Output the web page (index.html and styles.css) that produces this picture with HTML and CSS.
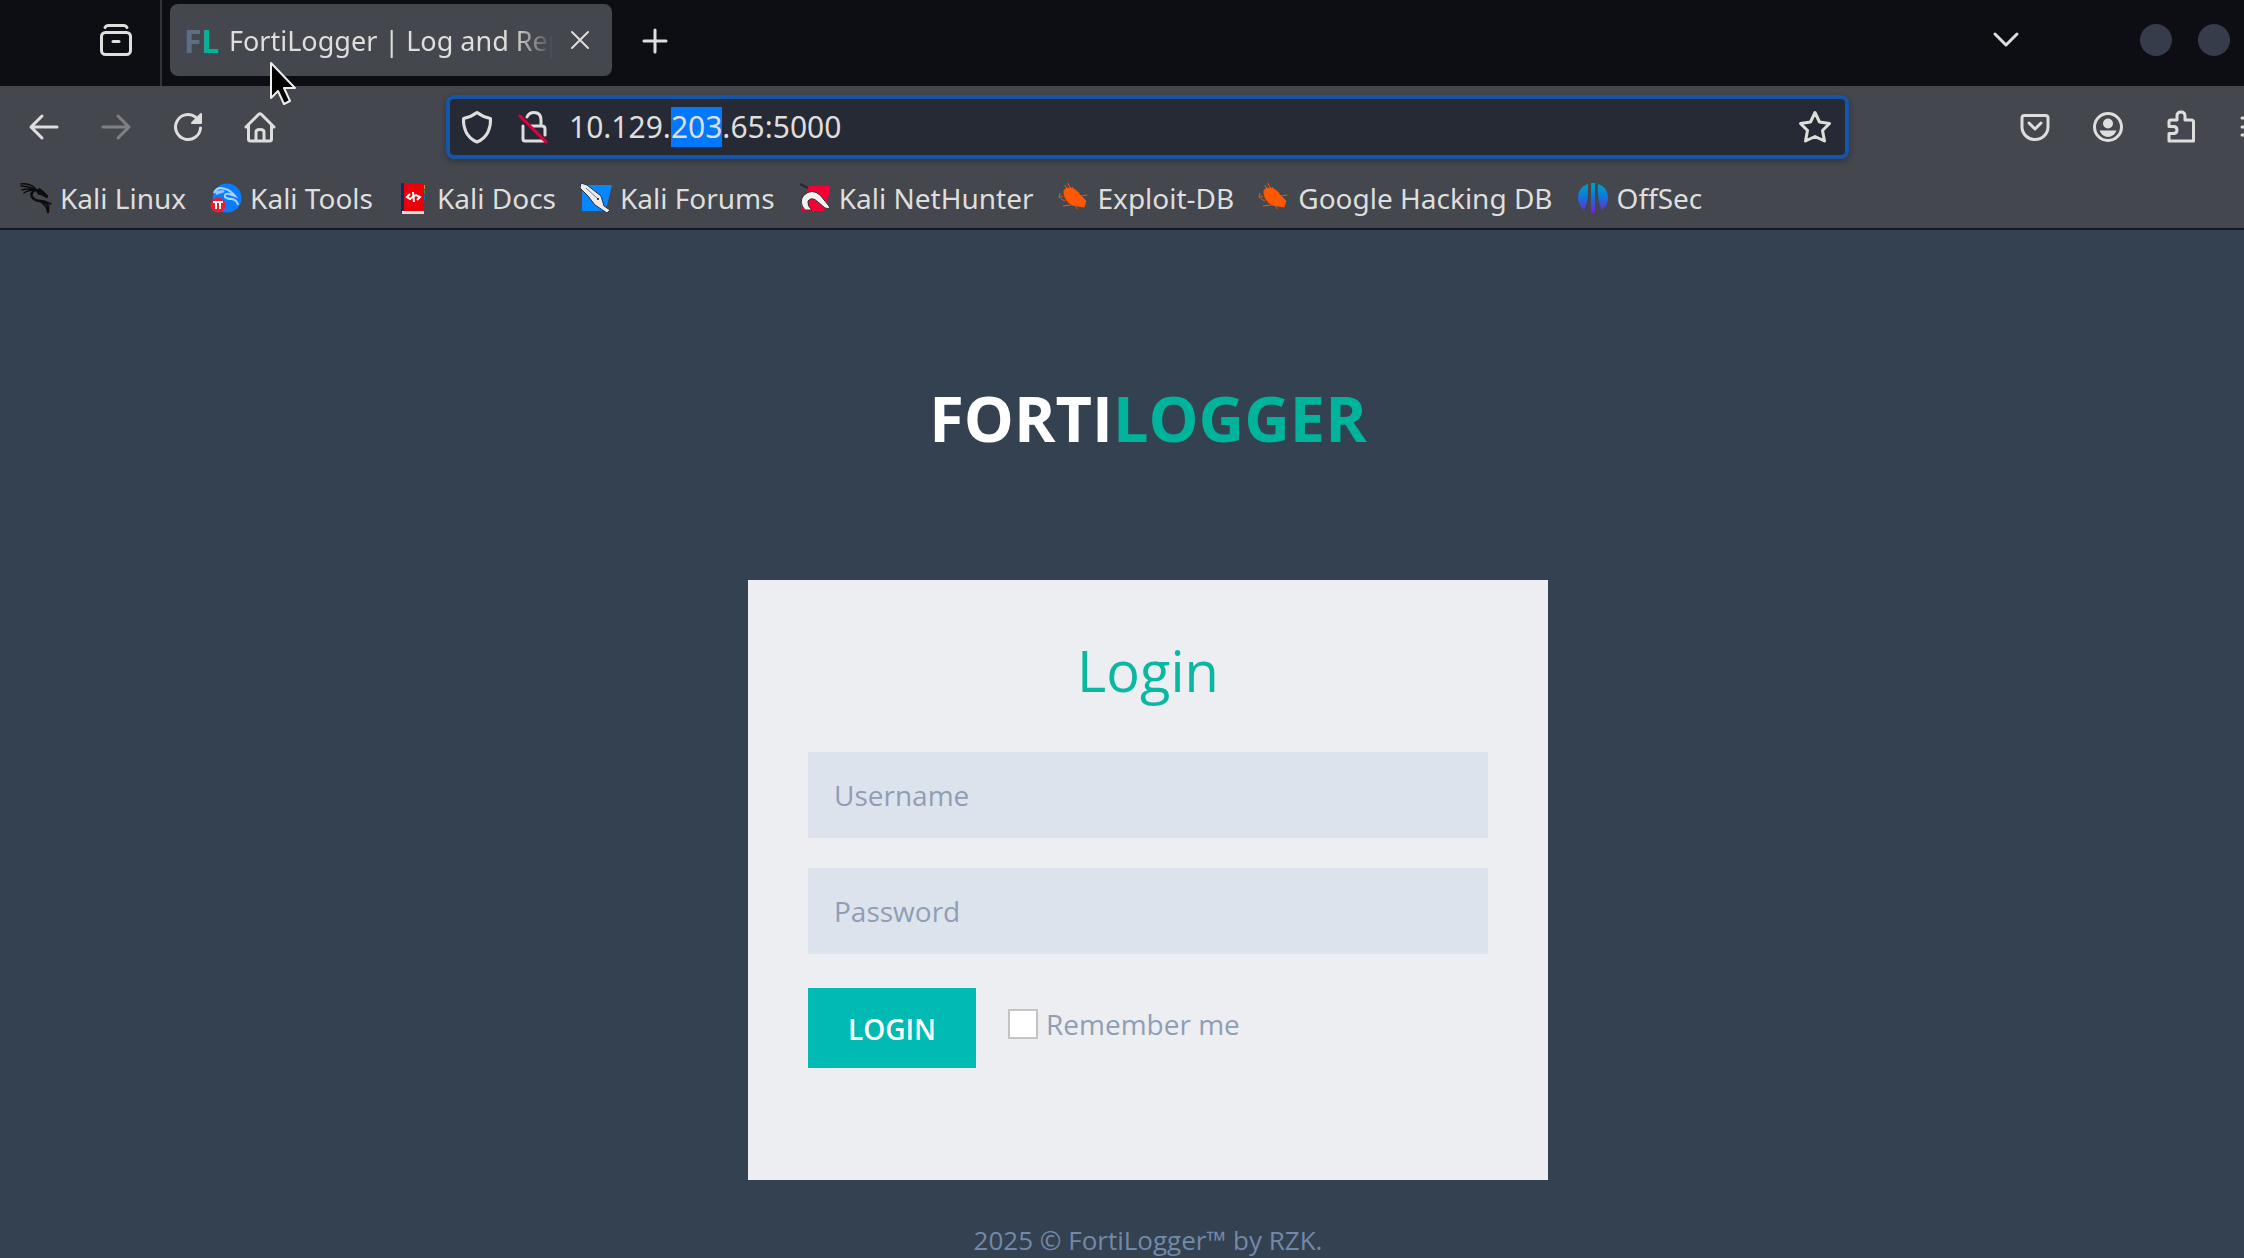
FILE: index.html
```html
<!DOCTYPE html>
<html lang="en">
<head>
<meta charset="utf-8">
<title>FortiLogger | Log and Report System</title>
<link rel="stylesheet" href="styles.css">
</head>
<body>
<div class="browser">
  <header class="tabstrip">
    <button class="icon-btn recent" aria-label="Recent browsing">
      <svg width="36" height="36" viewBox="0 0 36 36" fill="none" stroke="currentColor" stroke-width="3" stroke-linecap="round"><path d="M7 5.500Q8 3.500 10 3.500H26Q28 3.500 29 5.500"/><rect x="3.500" y="10.500" width="29" height="22" rx="4"/><path d="M15 19.500H21"/></svg>
    </button>
    <div class="tab">
      <span class="favicon"><span class="fav-f">F</span><span class="fav-l">L</span></span>
      <span class="tab-title">FortiLogger | Log and Report System</span>
      <button class="icon-btn" aria-label="Close tab">
        <svg width="20" height="20" viewBox="0 0 20 20" fill="none" stroke="currentColor" stroke-width="2" stroke-linecap="round"><path d="M2 2 18 18M18 2 2 18"/></svg>
      </button>
    </div>
    <button class="icon-btn new-tab" aria-label="New tab">
      <svg width="28" height="28" viewBox="0 0 28 28" fill="none" stroke="currentColor" stroke-width="3" stroke-linecap="round"><path d="M14 3V25M3 14H25"/></svg>
    </button>
    <div class="window-controls">
      <button class="icon-btn" aria-label="List all tabs">
        <svg width="28" height="28" viewBox="0 0 28 28" fill="none" stroke="currentColor" stroke-width="3" stroke-linecap="round" stroke-linejoin="round"><path d="M3 8 14 19 25 8"/></svg>
      </button>
      <button class="dot first" aria-label="Minimize"></button>
      <button class="dot" aria-label="Maximize"></button>
    </div>
  </header>

  <nav class="toolbar">
    <div class="nav-buttons">
      <button class="icon-btn" aria-label="Back">
        <svg width="36" height="36" viewBox="0 0 36 36" fill="none" stroke="currentColor" stroke-width="3" stroke-linecap="round" stroke-linejoin="round"><path d="M31 18H5M16 7 5 18 16 29"/></svg>
      </button>
      <button class="icon-btn dim" aria-label="Forward">
        <svg width="36" height="36" viewBox="0 0 36 36" fill="none" stroke="currentColor" stroke-width="3" stroke-linecap="round" stroke-linejoin="round"><path d="M5 18H31M20 7 31 18 20 29"/></svg>
      </button>
      <button class="icon-btn" aria-label="Reload">
        <svg width="36" height="36" viewBox="0 0 36 36" fill="none" stroke="currentColor" stroke-width="3" stroke-linecap="round"><path d="M30.500 19A12.500 12.500 0 1 1 25.500 8"/><path d="M31 5V14H22Z" fill="currentColor" stroke-width="2" stroke-linejoin="round"/></svg>
      </button>
      <button class="icon-btn" aria-label="Home">
        <svg width="36" height="36" viewBox="0 0 36 36" fill="none" stroke="currentColor" stroke-width="3" stroke-linecap="round" stroke-linejoin="round"><path d="M4 18 16.500 5.500Q18 4 19.500 5.500L32 18M6.500 16V30Q6.500 32 8.500 32H27.500Q29.500 32 29.500 30V16M14 32V23Q14 20.500 18 20.500T22 23V32"/></svg>
      </button>
    </div>
    <div class="urlbar">
      <svg width="36" height="36" viewBox="0 0 36 36" fill="none" stroke="currentColor" stroke-width="3" stroke-linejoin="round"><path d="M18 3.500Q24 8 31.500 9.500 32 16 29 23 25.500 30 18 33 10.500 30 7 23 4 16 4.500 9.500 12 8 18 3.500Z"/></svg>
      <svg class="lock" width="36" height="36" viewBox="0 0 36 36" fill="none" stroke="currentColor" stroke-width="3" stroke-linecap="round"><path d="M12 8Q14 3.500 19 3.500 26 3.500 26 11V16M8 17V30Q8 32 10 32H28M16 17H27Q30 17 30 20V26"/><path d="M5 7 31 33" stroke="#e0003f"/></svg>
      <input class="url" id="url" type="text" value="10.129.203.65:5000" aria-label="Address">
      <button class="icon-btn" aria-label="Bookmark this page">
        <svg width="36" height="36" viewBox="0 0 36 36" fill="none" stroke="currentColor" stroke-width="3" stroke-linejoin="round"><path d="M18 3.500 22.500 13 32.500 14.500 25.500 21.500 27.500 32 18 27.500 8.500 32 10.500 21.500 3.500 14.500 13.500 13Z"/></svg>
      </button>
    </div>
    <div class="tools">
      <button class="icon-btn" aria-label="Pocket">
        <svg width="36" height="36" viewBox="0 0 36 36" fill="none" stroke="currentColor" stroke-width="3" stroke-linecap="round" stroke-linejoin="round"><path d="M7.500 6.500H28.500Q31 6.500 31 9V18A13 12.500 0 0 1 5 18V9Q5 6.500 7.500 6.500ZM12 14 18 20 24 14"/></svg>
      </button>
      <button class="icon-btn" aria-label="Account">
        <svg width="36" height="36" viewBox="0 0 36 36" fill="none" stroke="currentColor" stroke-width="3"><circle cx="18" cy="18" r="13.500"/><circle cx="18" cy="14.500" r="5" fill="currentColor" stroke="none"/><path d="M9.500 21.500H26.500Q24 28 18 28T9.500 21.500Z" fill="currentColor" stroke="none"/></svg>
      </button>
      <button class="icon-btn" aria-label="Extensions">
        <svg width="36" height="36" viewBox="0 0 36 36" fill="none" stroke="currentColor" stroke-width="3" stroke-linejoin="round"><path d="M6 32V24.500H11Q14 24 14 21T11 17.500H6V12.500Q6 11 8 11H14V7Q14 3 18 3T22 7V11H28Q30.500 11 30.500 13V32Z"/></svg>
      </button>
      <button class="icon-btn" aria-label="Menu">
        <svg width="36" height="36" viewBox="0 0 36 36" fill="none" stroke="currentColor" stroke-width="3" stroke-linecap="round"><path d="M6 9H31M6 18H31M6 26H31"/></svg>
      </button>
    </div>
  </nav>

  <nav class="bookmarks">
    <a href="#kali-linux"><svg width="32" height="32" viewBox="0 0 32 32" fill="none" stroke="#0c0c0d" stroke-linecap="round" stroke-linejoin="round"><path d="M1 2Q9 1 15 6M1 4Q8 4 14 7M2 8Q7 6 13 8M4 11Q8 8 14 8" stroke-width="1.500"/><path d="M13 6Q17 8 20 8L19 6 24 10 28 14 27 16 22 13 18 12" fill="#0c0c0d"/><path d="M15 8Q10 11 12 15 15 19 21 19 27 20 28 24L28 30" stroke-width="2.500"/><path d="M21 20Q26 23 28 30M24 19 31 22" stroke-width="1.500"/></svg>Kali Linux</a>
    <a href="#kali-tools"><svg width="32" height="32" viewBox="0 0 32 32" fill="none"><circle cx="17" cy="16" r="14.500" fill="#0a7cff"/><path d="M4 11Q7 4 15 7 20 8 25 14L19 12Q14 11 15 15 17 17 22 17 27 18 28 23" stroke="#a9d3ff" stroke-width="2"/><path d="M5 9 13 8 15 10 6 13Z" fill="#8fc6ff"/><circle cx="8" cy="23" r="7.500" fill="#ed1b2e"/><path d="M3 20H13M6 20V27M10 20V27" stroke="#fff" stroke-width="2"/></svg>Kali Tools</a>
    <a href="#kali-docs"><svg width="32" height="32" viewBox="0 0 32 32" fill="none"><path d="M4 1H8V31H4Z" fill="#102a66"/><path d="M7 1H27V29H7Z" fill="#e90008"/><path d="M5 29H27V32H5Z" fill="#dedede"/><path d="M27.500 3V7" stroke="#e28a13"/><path d="M27.500 8V12" stroke="#1b9a5a"/><path d="M27.500 14V18" stroke="#1968c8"/><path d="M13 12 10 15 13 17 16 14.500 19 13 23 15 20 18M16 10 17 20" stroke="#fff" stroke-width="2"/></svg>Kali Docs</a>
    <a href="#kali-forums"><svg width="32" height="32" viewBox="0 0 32 32" fill="none"><path d="M2 3H32Q29 17 25 29H2Z" fill="#0786ff"/><path d="M1 1 7 3 21 14 24 24 30 28 27 31 15 23 8 14 0 6Z" fill="#ececec" stroke="#2c3136"/><path d="M6 6 18 17" stroke="#777"/><circle cx="18" cy="17" r="1" fill="#111"/></svg>Kali Forums</a>
    <a href="#kali-nethunter"><svg width="32" height="32" viewBox="0 0 32 32" fill="none"><path d="M10 4H30Q32 4 31 7L27 26 24 29H3L2 24Z" fill="#f40035"/><path d="M1 2 9 6" stroke="#222529" stroke-width="2"/><path d="M6 28Q-1 20 5 13 13 6 21 13L30 24 31 27 26 26 19 20Q13 14 9 19 8 24 13 28Z" fill="#f2f2f2" stroke="#30343a"/></svg>Kali NetHunter</a>
    <a href="#exploit-db"><svg width="32" height="32" viewBox="0 0 32 32" fill="none" stroke="#f95600"><path d="M6 11Q5 7 10 6 18 6 22 13L24 15 28 19 26 25 20 24 14 23Q7 19 6 11Z" fill="#ff5800"/><path d="M9 7 7 3M14 7 11 4 10 1M18 10 14 5M23 14 29 13M5 14 1 16 2 11M7 19 3 17M13 23 5 24M17 23 19 27"/></svg>Exploit-DB</a>
    <a href="#google-hacking-db"><svg width="32" height="32" viewBox="0 0 32 32" fill="none" stroke="#f95600"><path d="M6 11Q5 7 10 6 18 6 22 13L24 15 28 19 26 25 20 24 14 23Q7 19 6 11Z" fill="#ff5800"/><path d="M9 7 7 3M14 7 11 4 10 1M18 10 14 5M23 14 29 13M5 14 1 16 2 11M7 19 3 17M13 23 5 24M17 23 19 27"/></svg>Google Hacking DB</a>
    <a href="#offsec"><svg width="32" height="32" viewBox="0 0 32 32"><defs><linearGradient id="os" x1="0" y1="1" x2="0" y2="31" gradientUnits="userSpaceOnUse"><stop offset="0" stop-color="#00a3b8"/><stop offset=".4" stop-color="#087fd8"/><stop offset="1" stop-color="#7420db"/></linearGradient></defs><path d="M11 2V10Q11 20 7 28 1 23 1 16 1 5 11 2ZM14 1H18V17L18 31H14L14 17ZM21 2V10Q21 20 25 28 31 23 31 16 31 5 21 2Z" fill="url(#os)"/></svg>OffSec</a>
  </nav>
  <svg class="cursor" width="32" height="46" viewBox="0 0 32 46"><path d="M2 2V37L9 30 15 43 21 40 15 27H26Z" fill="#000" stroke="#eee" stroke-width="2" stroke-linejoin="round"/></svg>
</div>

<main class="page">
  <h1 class="logo">FORTI<span>LOGGER</span></h1>
  <form class="card">
    <h2>Login</h2>
    <input class="field" type="text" placeholder="Username" aria-label="Username">
    <input class="field" type="password" placeholder="Password" aria-label="Password">
    <div class="actions">
      <button class="submit" type="button">LOGIN</button>
      <label class="remember"><input type="checkbox">Remember me</label>
    </div>
  </form>
  <footer>2025 © FortiLogger™ by RZK.</footer>
</main>
<script src="script.js"></script>
</body>
</html>
```
FILE: styles.css
```css
* { box-sizing: border-box; }
body {
  margin: 0;
  min-height: 100vh;
  display: flex;
  flex-direction: column;
  overflow: hidden;
  background: #334150;
  font-family: "Open Sans", "Noto Sans", sans-serif;
}
button { border: 0; padding: 0; background: none; color: inherit; font: inherit; }
svg { display: block; flex: none; }

.browser {
  position: relative;
  background: #45474e;
  border-bottom: 2px solid #18191f;
  color: #dededc;
  font-family: "Noto Sans", sans-serif;
  font-size: 28px;
}
.icon-btn { display: flex; flex: none; }
.dim { color: #808186; }

.tabstrip {
  display: flex;
  align-items: center;
  height: 86px;
  background: #0d0e13;
}
.recent {
  align-self: stretch;
  align-items: center;
  width: 162px;
  padding: 0 0 6px 98px;
  border-right: 2px solid #33343a;
}
.tab {
  display: flex;
  align-items: center;
  width: 442px;
  height: 72px;
  margin: 0 29px 6px 8px;
  padding: 0 22px 0 14px;
  border-radius: 8px;
  background: #45474e;
}
.favicon { display: flex; width: 45px; font-weight: 700; font-size: 32px; }
.fav-f { color: #5c6f83; }
.fav-l { color: #00b49c; }
.tab-title {
  flex: 1;
  min-width: 0;
  margin-right: 17px;
  overflow: hidden;
  font-size: 27px;
  white-space: nowrap;
  mask-image: linear-gradient(to left, transparent, #000 40px);
}
.new-tab { margin-bottom: 4px; }
.window-controls { display: flex; align-items: center; margin: 0 14px 6px auto; }
.dot { width: 32px; height: 32px; border-radius: 50%; background: #373c4b; }
.dot.first { margin: 0 26px 0 120px; }

.toolbar { display: flex; align-items: center; height: 81px; padding-left: 26px; overflow: hidden; }
.nav-buttons { display: flex; gap: 36px; }
.urlbar {
  display: flex;
  align-items: center;
  flex: 1;
  height: 64px;
  margin-left: 168px;
  padding: 0 12px 0 9px;
  border: 4px solid #1755a6;
  border-radius: 8px;
  background: #262a35;
  box-shadow: 0 2px 6px #00000050;
}
.lock { margin-left: 20px; }
.url {
  flex: 1;
  min-width: 0;
  height: 40px;
  margin-left: 18px;
  padding: 0;
  border: 0;
  outline: 0;
  background: none;
  color: inherit;
  font: 30px/40px "Noto Sans", sans-serif;
}
.url::selection { background: #0078ff; color: #dededc; }
.tools { display: flex; gap: 37px; margin: 0 -28px 0 168px; }

.bookmarks { display: flex; align-items: center; gap: 24px; height: 61px; padding: 0 20px; }
.bookmarks a {
  display: flex;
  align-items: center;
  gap: 8px;
  color: inherit;
  text-decoration: none;
  white-space: nowrap;
}
.cursor { position: absolute; left: 269px; top: 61px; }

.page {
  display: flex;
  flex: 1;
  flex-direction: column;
  align-items: center;
  padding-left: 52px;
}
.logo { margin: 140px 0 114px; color: #fff; font-size: 63px; line-height: 96px; }
.logo span { color: #00b49c; }
.card {
  display: flex;
  flex-direction: column;
  width: 800px;
  padding: 58px 60px 112px;
  background: #edeef2;
}
.card h2 { margin: 0 0 50px; color: #0ab8a2; font-size: 56px; font-weight: 400; line-height: 64px; text-align: center; }
.field {
  height: 86px;
  margin-bottom: 30px;
  padding: 0 26px;
  border: 0;
  background: #dde3ed;
  font: 28px/40px "Open Sans", sans-serif;
}
.field::placeholder { color: #8f9eb4; opacity: 1; }
.actions { display: flex; gap: 32px; margin-top: 4px; }
.submit { width: 168px; height: 80px; padding-top: 2px; background: #00bab3; color: #fff; font-size: 28px; font-weight: 600; }
.remember { display: flex; align-items: center; gap: 8px; height: 72px; color: #8f9eb4; font-size: 28px; }
.remember input {
  appearance: none;
  width: 30px;
  height: 30px;
  margin: 0;
  border: 2px solid #c4c4c6;
  background: #fff;
}
footer { margin-top: 40px; color: #7389a8; font-size: 26px; line-height: 40px; }
```
FILE: script.js
```js
const url = document.getElementById("url");
url.focus();
url.setSelectionRange(7, 10);
```
